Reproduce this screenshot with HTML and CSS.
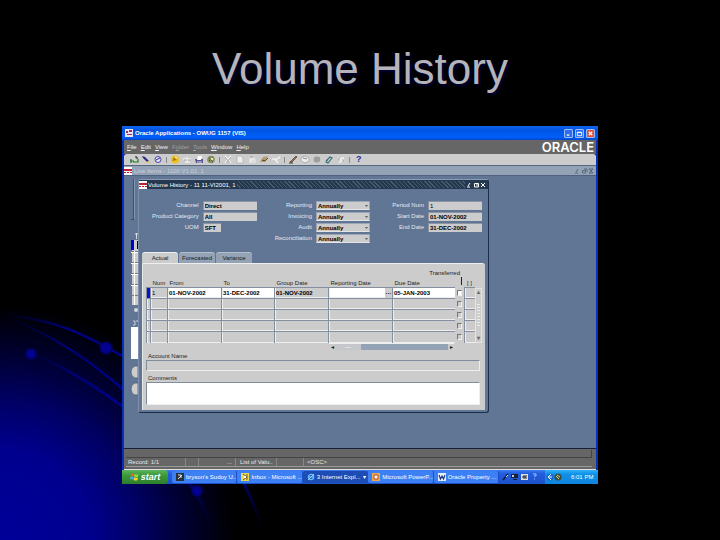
FILE: index.html
```html
<!DOCTYPE html>
<html lang="en">
<head>
<meta charset="utf-8">
<title>Volume History</title>
<link rel="stylesheet" href="styles.css">
</head>
<body>
<svg class="swirl" viewBox="0 0 300 260" aria-hidden="true">
  <defs>
    <radialGradient id="orb"><stop offset="0" stop-color="#0202a0"/><stop offset=".6" stop-color="#020284"/><stop offset="1" stop-color="#000050" stop-opacity="0"/></radialGradient>
    <linearGradient id="trail"><stop offset="0" stop-color="#000060" stop-opacity="0"/><stop offset=".5" stop-color="#000078"/><stop offset="1" stop-color="#000090"/></linearGradient>
    <linearGradient id="fall" x2="0" y2="1"><stop offset="0" stop-color="#000078"/><stop offset="1" stop-color="#000030" stop-opacity="0"/></linearGradient>
  </defs>
  <g fill="none" stroke="url(#trail)" stroke-width="2.400">
    <path d="M6 36C40 37 76 50 106 67L126 78"/>
    <path d="M10 39C50 54 90 80 126 112"/>
    <path d="M31 74C60 84 95 106 126 129"/>
  </g>
  <g fill="none" stroke="url(#fall)" stroke-width="3">
    <path d="M187 200Q202 220 214 252"/>
    <path d="M242 200Q254 222 264 254"/>
  </g>
  <circle cx="106" cy="68" r="8" fill="url(#orb)"/>
  <circle cx="31" cy="74" r="7" fill="url(#orb)"/>
  <circle cx="197" cy="211" r="7" fill="url(#orb)"/>
</svg>
<main class="slide">
  <h1>Volume History</h1>
  <section class="app">
    <header class="app-title">
      <svg class="logo" viewBox="0 0 8 8"><path fill="#e8e4f4" d="M0 0h8v8H0z"/><path fill="#a03058" d="M1 2h2v2H1zM4 1h3v2H4zM2 5h5v1H2z"/></svg>
      <span class="grow">Oracle Applications - OWUG 1157 (VIS)</span>
      <button class="xp" aria-label="Minimize"><svg viewBox="0 0 8 8"><path d="M2 5h3v1.500H2z" fill="#fff"/></svg></button>
      <button class="xp" aria-label="Restore"><svg viewBox="0 0 8 8"><path d="M1.500 2.500h5v4h-5zM1.500 3h5" fill="none" stroke="#fff"/></svg></button>
      <button class="xp close" aria-label="Close"><svg viewBox="0 0 8 8"><path d="M2 2l4 4M6 2L2 6" stroke="#fff" stroke-width="1.300"/></svg></button>
    </header>
    <nav class="menu">
      <button><u>F</u>ile</button><button><u>E</u>dit</button><button><u>V</u>iew</button><button disabled>F<u>o</u>lder</button><button disabled><u>T</u>ools</button><button><u>W</u>indow</button><button><u>H</u>elp</button>
      <span class="brand">ORACLE</span>
    </nav>
    <div class="toolbar">
      <button aria-label="New"><svg viewBox="0 0 10 9"><path d="M1 5h8v3H1z" fill="#d8d4c0"/><path d="M1 6h4M2 4v4M4 7h5V4" stroke="#187838" fill="none" stroke-width="1.200"/><path d="M6 2h2v2" stroke="#222" fill="none"/></svg></button>
      <button aria-label="Find"><svg viewBox="0 0 10 9"><path d="M1 1l3 1 4 4-2 1-4-4z" fill="#2c2888"/><path d="M5 7l3-1 1 2H6z" fill="#e0c850"/></svg></button>
      <button aria-label="Navigator"><svg viewBox="0 0 10 9"><circle cx="5" cy="4.500" r="3" fill="#e4e0ff" stroke="#5048a0"/><path d="M3 5l4-2" stroke="#332c90"/></svg></button>
      <i></i>
      <button aria-label="Save"><svg viewBox="0 0 10 9"><circle cx="5" cy="4.500" r="4" fill="#f0c020"/><path d="M2 6l5-1-3-3z" fill="#a88020"/><path d="M5 2l2 1" stroke="#fff"/></svg></button>
      <button aria-label="Next Step"><svg viewBox="0 0 10 9"><path d="M1 4h3M5 2v5M6 4h3M3 7h5" stroke="#eee" stroke-width="1.500"/><path d="M2 5h3M6 5h3" stroke="#999" stroke-width=".7"/></svg></button>
      <button aria-label="Print"><svg viewBox="0 0 10 9"><path d="M1 4h8v4H2z" fill="#555492"/><path d="M4 1h4L7 5H3z" fill="#fff"/><path d="M3 7h5" stroke="#ddd"/></svg></button>
      <button aria-label="Close Form"><svg viewBox="0 0 10 9"><circle cx="5" cy="4.500" r="3.800" fill="#8a9060"/><path d="M3 3l4 4M3 6l4-4" stroke="#4c5534"/><circle cx="6" cy="4" r="1.300" fill="#e6e8a0"/></svg></button>
      <i></i>
      <button aria-label="Cut"><svg viewBox="0 0 10 9"><path d="M2 1l6 7M8 1L2 8" stroke="#f4f4f4" stroke-width="1.500"/><path d="M2 2l5 6M8 2L3 8" stroke="#888" stroke-width=".6"/></svg></button>
      <button aria-label="Copy"><svg viewBox="0 0 10 9"><path d="M2 1h4l2 2v5H2z" fill="#eee" stroke="#aaa" stroke-width=".7"/></svg></button>
      <button aria-label="Paste"><svg viewBox="0 0 10 9"><path d="M2 2h5v6H2z" fill="#ddd"/><path d="M4 8V4h4v4" stroke="#eee" fill="none"/><path d="M3 2h3" stroke="#999"/></svg></button>
      <button aria-label="Clear"><svg viewBox="0 0 10 9"><path d="M1 7l3-5 5-1-3 6z" fill="#b49c70"/><path d="M3 5l3 1 3-3" stroke="#59482c" fill="none"/></svg></button>
      <button aria-label="Delete"><svg viewBox="0 0 10 9"><path d="M1 4h5l3-2M4 4l3 4" stroke="#f0f0f0" stroke-width="1.600" fill="none"/></svg></button>
      <i></i>
      <button aria-label="Edit Field"><svg viewBox="0 0 10 9"><path d="M2 7l6-6 1 1-5 5z" fill="#b06838" stroke="#333" stroke-width=".6"/><path d="M1 8h4" stroke="#333"/></svg></button>
      <button aria-label="Zoom"><svg viewBox="0 0 10 9"><path d="M1 3l4-2 4 2v3L5 8 1 6z" fill="#eee" stroke="#999" stroke-width=".7"/><path d="M3 3l4 1" stroke="#888"/></svg></button>
      <button aria-label="Translations"><svg viewBox="0 0 10 9"><circle cx="5" cy="4.500" r="3.300" fill="#aaa"/><path d="M3 2v5M5 2v5M7 2v4" stroke="#888" stroke-width=".7"/></svg></button>
      <button aria-label="Attachments"><svg viewBox="0 0 10 9"><path d="M2 6l4-4 2 1-4 5-2-1 3-4" fill="none" stroke="#327076" stroke-width="1.100"/></svg></button>
      <button aria-label="Folder Tools"><svg viewBox="0 0 10 9"><path d="M2 2l5 5M5 3h3M3 7h2" stroke="#f4f4f4" stroke-width="1.500"/><path d="M3 2v3M6 6h2" stroke="#888" stroke-width=".7"/></svg></button>
      <i></i>
      <button aria-label="Help"><b>?</b></button>
    </div>
    <div class="mdi-title">
      <svg class="logo" viewBox="0 0 8 8"><path fill="#fff" d="M0 0h8v8H0z"/><path fill="#c02030" d="M0 2h8v2H0zM0 5h2v1H0zM3 5h2v1H3zM6 5h2v1H6z"/></svg>
      <span class="grow">Line Items - 1100 V1.01, 1</span>
      <svg class="wins" viewBox="0 0 20 6"><path d="M1 5h3M2 4l2-3M8.500 2.500h3v2.500h-3zM10 1h3v3M15 1l4 4M19 1l-4 4M15 1h4M15 5h4" fill="none" stroke="#586a80"/></svg>
    </div>
    <div class="desktop">
      <svg class="behind" viewBox="0 0 14 272" aria-hidden="true">
        <path d="M9.500 3v40M7 43.500h3" stroke="#3c5070" fill="none"/><path d="M10.500 3v40" stroke="#8497b0"/>
        <path d="M12.500 57v6M11 58h3" stroke="#d8dde4"/>
        <path d="M8 64h6v65H8z" fill="#ccc"/><path d="M7 64h3v10H7z" fill="#00c"/><path d="M13 65h1v8h-1z" fill="#000"/>
        <path d="M7 75.500h7M7 86.500h7M7 97.500h7M7 108.500h7M7 119.500h7" stroke="#778"/><path d="M7 76.500h7M7 87.500h7M7 98.500h7M7 109.500h7M10.500 75v54" stroke="#fff"/>
        <circle cx="12" cy="134" r="2" fill="#d4d8dc"/><path d="M9 145h2v4H9M12 145h2" stroke="#ccd" fill="none"/>
        <path d="M7 151h7v32H7z" fill="#fff"/><path d="M14 190h-3q-4 1-4 6t4 6h3zM14 207h-3q-4 1-4 6t4 6h3z" fill="#ccc" stroke="#445672" stroke-width=".7"/>
      </svg>
      <form class="window">
        <div class="win-title">
          <svg class="logo" viewBox="0 0 8 8"><path fill="#fff" d="M0 0h8v8H0z"/><path fill="#c02030" d="M0 2h8v2H0zM0 5h2v1H0zM3 5h2v1H3zM6 5h2v1H6z"/></svg>
          <span>Volume History - 11 11-VI2001, 1</span>
          <div class="hatch"></div>
          <svg class="wins" viewBox="0 0 20 6"><path d="M1 5h3M2 4l2-3M8.500 1.500h4v3.500h-4zM10 3h2M15 1l4 4M19 1l-4 4" fill="none" stroke="#fff"/></svg>
        </div>
        <div class="fields">
          <div class="group">
            <label for="channel">Channel</label><input id="channel" value="Direct">
            <label for="category">Product Category</label><input id="category" value="All">
            <label for="uom">UOM</label><input id="uom" class="short" value="SFT">
          </div>
          <div class="group">
            <label for="reporting">Reporting</label><select id="reporting"><option>Annually</option></select>
            <label for="invoicing">Invoicing</label><select id="invoicing"><option>Annually</option></select>
            <label for="audit">Audit</label><select id="audit"><option>Annually</option></select>
            <label for="recon">Reconciliation</label><select id="recon"><option>Annually</option></select>
          </div>
          <div class="group">
            <label for="period">Period Num</label><input id="period" class="plain" value="1">
            <label for="start">Start Date</label><input id="start" value="01-NOV-2002">
            <label for="end">End Date</label><input id="end" value="31-DEC-2002">
          </div>
        </div>
        <div class="tabs"><button type="button" class="on">Actual</button><button type="button">Forecasted</button><button type="button">Variance</button></div>
        <div class="panel">
          <div class="transferred">Transferred</div>
          <table>
            <colgroup><col class="c-ind"><col class="c-num"><col class="c-from"><col class="c-to"><col class="c-from"><col class="c-rep"><col class="c-due"><col class="c-chk"><col class="c-chk"><col class="c-bar"></colgroup>
            <thead><tr><th></th><th>Num</th><th>From</th><th>To</th><th>Group Date</th><th>Reporting Date</th><th>Due Date</th><th class="tick"></th><th class="flex">[ ]</th><th></th></tr></thead>
            <tbody>
              <tr class="current"><td class="ind"></td><td class="num">1</td><td class="white">01-NOV-2002</td><td class="white">31-DEC-2002</td><td>01-NOV-2002</td><td class="white"><div class="lov"><input aria-label="Reporting Date"><button type="button" aria-label="List of values">···</button></div></td><td class="white">05-JAN-2003</td><td class="chk"><input type="checkbox" aria-label="Transferred row 1"></td><td></td>
                <td class="vbar" rowspan="5"><div class="vscroll"><span>▴</span><b></b><span>▾</span></div></td></tr>
              <tr><td></td><td></td><td></td><td></td><td></td><td></td><td></td><td class="chk"><input type="checkbox" aria-label="Transferred row 2"></td><td></td></tr>
              <tr><td></td><td></td><td></td><td></td><td></td><td></td><td></td><td class="chk"><input type="checkbox" aria-label="Transferred row 3"></td><td></td></tr>
              <tr><td></td><td></td><td></td><td></td><td></td><td></td><td></td><td class="chk"><input type="checkbox" aria-label="Transferred row 4"></td><td></td></tr>
              <tr><td></td><td></td><td></td><td></td><td></td><td></td><td></td><td class="chk"><input type="checkbox" aria-label="Transferred row 5"></td><td></td></tr>
            </tbody>
          </table>
          <div class="hscroll"><span>◂</span><b>···</b><div class="grow"></div><span>▸</span></div>
          <label for="account">Account Name</label>
          <input id="account" class="wide">
          <label for="comments">Comments</label>
          <textarea id="comments"></textarea>
        </div>
      </form>
    </div>
    <footer class="status">
      <div class="message"></div>
      <div class="record"><span class="s1">Record: 1/1</span><span class="s2"></span><span class="s3">...</span><span class="s4">List of Valu..</span><span class="s5"></span><span class="s6">&lt;OSC&gt;</span></div>
    </footer>
    <div class="taskbar">
      <button class="start"><svg viewBox="0 0 9 9"><path d="M1 2q2-1 3 0L3.500 4.500q-1-1-3 0z" fill="#f06030"/><path d="M4.500 2q2 1 4 0L8 5q-2 1-4 0z" fill="#90d840"/><path d="M.5 5q2-1 3 0L3 7.500q-1-1-3 0z" fill="#58a0ff"/><path d="M4 5.500q2 1 4 0l-.5 2.500q-2 1-4 0z" fill="#ffd030"/></svg>start</button>
      <button class="task"><svg viewBox="0 0 8 8"><path d="M0 0h8v8H0z" fill="#26323c"/><path d="M2 6l4-4M2 2h3v3" stroke="#e8e8e8" fill="none"/></svg><span>bryson's Sudoy U...</span></button>
      <button class="task"><svg viewBox="0 0 8 8"><path d="M0 0h8v8H0z" fill="#ecd858"/><path d="M2 1l4 3-4 3M6 1v6" stroke="#655c28" fill="none"/><path d="M3 3h2v2H3z" fill="#fff"/></svg><span>Inbox - Microsoft ...</span></button>
      <button class="task active"><svg viewBox="0 0 8 8"><circle cx="4" cy="4" r="2.600" fill="none" stroke="#60c0ff" stroke-width="1.400"/><path d="M2 4h4M1 7l6-6" stroke="#b0e0ff" stroke-width=".8"/></svg><span class="grow">3 Internet Expl...</span><em>▾</em></button>
      <button class="task"><svg viewBox="0 0 8 8"><path d="M0 0h8v8H0z" fill="#f0a850"/><path d="M2 2h4v4H2z" fill="#fff" stroke="#b84818"/></svg><span>Microsoft PowerP...</span></button>
      <button class="task"><svg viewBox="0 0 8 8"><path d="M0 0h8v8H0z" fill="#e8eefa"/><path d="M1 2l1.500 4L4 3l1.500 3L7 2" stroke="#203880" fill="none" stroke-width="1.200"/></svg><span>Oracle Property ...</span></button>
      <div class="tray">
        <svg viewBox="0 0 46 10"><path d="M4 8l4-5 1-1" stroke="#111c38" stroke-width="1.600"/><path d="M7 5l2-2" stroke="#ddd"/><path d="M12 2h7v4h-7zM14 7h4v1h-4z" fill="#182038"/><path d="M13 3h2v2h-2z" fill="#ccc"/><path d="M22 2h7v6h-7z" fill="#dde0e4"/><path d="M24 4h2v2h-2zM27 3v4" stroke="#222" fill="none"/><path d="M34 2h3v2h-2M35 7h1" stroke="#9cc4ff" fill="none"/></svg>
      </div>
      <div class="clock"><svg viewBox="0 0 18 10"><circle cx="5" cy="5" r="3.600" fill="#1868d0"/><path d="M6 2L3 5l3 3M3 5h4" stroke="#e8f6ff" fill="none"/><circle cx="13" cy="5" r="3.600" fill="#394d40"/><path d="M11 4l3 3M12 3l3 2" stroke="#d9d28c"/></svg><time>6:01 PM</time></div>
    </div>
  </section>
</main>
</body>
</html>
```

FILE: styles.css
```css
* { box-sizing: border-box; }
body {
  margin: 0;
  min-height: 100vh;
  background: radial-gradient(circle at 0 100%, #000099 0, #00008e 90px, #000064 140px, #00002c 190px, #000 235px) #000;
  font: 6px/8px "Liberation Sans", Arial, sans-serif;
  position: relative;
}
button, input, select, textarea {
  font: inherit; color: inherit; border: 0; border-radius: 0;
  padding: 0; margin: 0; background: none; min-width: 0;
}
button { white-space: nowrap; }
svg { display: block; flex: none; }
.grow { flex: 1; }
.swirl { position: absolute; left: 0; bottom: 0; width: 300px; height: 260px; }
.slide { position: relative; padding: 42px 122px 0; }
h1 {
  margin: 0 0 30px; font-size: 44px; line-height: 54px; font-weight: 400;
  text-align: center; color: #b4b4ba; text-shadow: 2px 2px 3px #000038;
  white-space: nowrap;
}

.app { background: #0a2fb4; }
.app-title {
  height: 14px; display: flex; align-items: center; gap: 2px; padding: 0 3px;
  background: linear-gradient(#1264f0, #0054e4 30%, #0060f8 80%, #0046c8);
  color: #fff; font-weight: 700;
}
.logo { width: 8px; height: 8px; }
.xp { width: 9px; height: 9px; background: #2c6cf0; border: 1px solid #9cbcf8; border-radius: 1px; }
.xp svg { width: 7px; height: 7px; }
.xp.close { background: #e0503a; }

.menu, .toolbar, .mdi-title, .desktop, .status { margin: 0 2px; }
.menu {
  height: 14px; display: flex; align-items: center; gap: 4px; padding-left: 3px;
  background: #666; color: #f0f0f0;
}
.menu button:disabled { color: #a0a0a0; }
.menu u { text-decoration-thickness: 1px; }
.brand { margin-left: auto; padding-right: 2px; color: #fff; font: 600 13px/14px "Inter", sans-serif; }
.toolbar {
  height: 12px; display: flex; align-items: center; gap: 2px; padding-left: 5px;
  background: #ccc; border-bottom: 1px solid #566880; border-radius: 3px 3px 0 0;
}
.toolbar svg { width: 10px; height: 9px; }
.toolbar i { width: 1px; height: 6px; background: #888; margin: 0 1px; }
.toolbar b { color: #28289c; font-size: 9px; padding-left: 3px; }
.mdi-title {
  height: 10px; display: flex; align-items: center; gap: 2px; padding-right: 2px;
  background: #93a2b5; border-bottom: 1px solid #4e6180; color: #c8d2de;
}
.wins { width: 20px; height: 6px; }

.desktop {
  position: relative; background: #617595; padding: 3px 107px 35px 14px;
  border-bottom: 1px solid #14203c;
}
.behind { position: absolute; left: 0; top: 0; width: 14px; height: 272px; }
.window {
  position: relative; background: #617595; padding: 0 3px 2px;
  border: 1px solid #1c2e4c; border-top-color: #8c9cb4; border-left-color: #8090aa; border-radius: 3px;
}
.win-title {
  height: 9px; margin: 0 -3px; display: flex; align-items: center; gap: 1px; padding: 0 2px 0 0;
  background: #24384f; color: #fff;
}
.hatch {
  flex: 1; height: 7px;
  background: repeating-linear-gradient(45deg, #24384f 0 2px, #465a70 2px 3px);
}
.fields {
  display: flex; justify-content: flex-end; gap: 18px; align-items: flex-start;
  margin: 12px 3px 9px; color: #e4eaf2;
}
.group { display: grid; grid-template-columns: 1fr 54px; column-gap: 4px; row-gap: 2px; }
.group label { text-align: right; line-height: 9px; min-width: 36px; }
.group input, .group select {
  height: 9px; width: 100%; background: #ccc; color: #000; font-weight: 700;
  border-top: 1px solid #8a94a2; border-left: 1px solid #8a94a2; padding-left: 1px;
}
.group .short { width: 18px; }
.group .plain { font-weight: 400; }
.group select {
  appearance: none; border: 1px solid #9aa6b6; border-bottom-color: #e4e4e4;
  background: linear-gradient(#777, #777) 48px 3px / 3px 1px no-repeat,
    linear-gradient(#777, #777) 49px 4px / 1px 1px no-repeat, #ccc;
}

.tabs { display: flex; gap: 1px; }
.tabs button {
  width: 36px; height: 11px; background: #93a2b5; color: #101820;
  border-radius: 3px 3px 0 0; border-top: 1px solid #b4bfcc;
}
.tabs .on { background: #ccc; border-top-color: #eee; }
.panel {
  background: #ccc; border-radius: 0 3px 0 0; padding: 5px 5px 5px 3px;
  border-top: 1px solid #eee; border-left: 1px solid #e8e8e8; color: #222;
}
.transferred { text-align: right; padding-right: 20px; line-height: 8px; }
table { width: 100%; table-layout: fixed; border-collapse: collapse; }
.c-ind { width: 4px; } .c-num { width: 17px; } .c-from { width: 54px; } .c-to { width: 53px; }
.c-rep { width: 64px; } .c-due { width: 62px; } .c-chk { width: 10px; } .c-bar { width: 7px; }
th {
  height: 10px; padding: 2px 0 0 2px; text-align: left; vertical-align: bottom;
  font-weight: 400; line-height: 8px; white-space: nowrap;
}
th.tick { background: linear-gradient(#222, #222) 6px 0 / 1px 8px no-repeat; }
th.flex { text-align: center; padding: 2px 0 0; }
td {
  height: 11px; padding: 0 0 0 1px; line-height: 8px; font-weight: 700; color: #000; white-space: nowrap;
  border-top: 1px solid #8490a0; border-left: 1px solid #8490a0;
  box-shadow: inset 1px 0 #eee, inset 0 -1px #eee;
}
td.white { background: #fff; }
td.num { font-weight: 400; }
td.ind { background: #1010d0; box-shadow: none; }
td.chk, td.vbar { border: 0; box-shadow: none; padding: 0; }
.lov { display: flex; margin-left: -1px; }
.lov input { flex: 1; width: 0; }
.lov button { width: 7px; height: 10px; background: #ccc; text-align: center; }
.chk input {
  appearance: none; display: block; width: 5px; height: 6px; margin: 0 auto;
  border: 1px solid #eee; border-top-color: #777; border-left-color: #777;
}
.current .chk input { background: #fff; }
.vscroll {
  height: 55px; display: flex; flex-direction: column; align-items: center;
  border: 1px solid #e4e4e4; color: #666;
}
.vscroll span { line-height: 7px; }
.vscroll b { flex: 1; width: 3px; background: repeating-linear-gradient(#eee 0 1px, #ccc 1px 3px); margin: 8px 0; }
.hscroll { display: flex; height: 7px; margin: 0 26px 2px 183px; background: #93a2b5; border-top: 1px solid #eee; line-height: 6px; }
.hscroll span { width: 6px; background: #ccc; text-align: center; }
.hscroll b { width: 26px; background: #c4c8cc; color: #fff; text-align: center; }
.panel > label { display: block; padding: 0 2px; line-height: 8px; }
.wide, textarea {
  display: block; width: 100%; height: 11px; resize: none; margin-bottom: 3px;
  border: 1px solid #eee; border-top-color: #808c9c; border-left-color: #808c9c;
}
textarea { height: 23px; background: #fff; margin: 0; overflow: hidden; }

.status { background: #666; color: #e8e8e8; border-bottom: 1px solid #e0e0e0; padding: 1px 4px 2px 2px; }
.message { height: 8px; border-bottom: 1px solid #444; border-right: 1px solid #444; }
.record { display: flex; height: 9px; border-bottom: 1px solid #999; line-height: 9px; }
.record span { border-right: 1px solid #888; white-space: nowrap; }
.s1 { width: 60px; padding-left: 2px; } .s2 { width: 13px; } .s3 { width: 37px; text-align: right; padding-right: 3px; }
.s4 { width: 41px; padding-left: 4px; } .s5 { width: 27px; }
.record .s6 { padding-left: 3px; border: 0; }

.taskbar {
  display: flex; align-items: center; height: 14px; color: #fff;
  background: linear-gradient(#3c7cf0, #245edc 25%, #1c50c8);
}
.start {
  width: 46px; height: 14px; display: flex; align-items: center; justify-content: center; gap: 2px;
  background: linear-gradient(#5cb45c, #389838 40%, #2c802c); border-radius: 0 4px 4px 0;
  font: italic 700 9px/12px "Liberation Sans", sans-serif; margin-right: 4px;
}
.start svg { width: 9px; height: 9px; }
.task {
  flex: 1; height: 12px; display: flex; align-items: center; gap: 2px; padding: 0 1px 0 4px;
  background: #3c80f4; border-right: 1px solid #1c50c8; border-radius: 2px; text-align: left;
  overflow: hidden;
}
.task svg { width: 8px; height: 8px; }
.task.active { background: #1c4cb4; }
.task em { font-style: normal; }
.tray { width: 46px; }
.tray svg { width: 46px; height: 10px; }
.clock { width: 53px; height: 14px; display: flex; align-items: center; gap: 8px; background: linear-gradient(#30b0f8, #1090e8 30%, #1084dc); }
.clock svg { width: 18px; height: 10px; }
time { white-space: nowrap; }
```
